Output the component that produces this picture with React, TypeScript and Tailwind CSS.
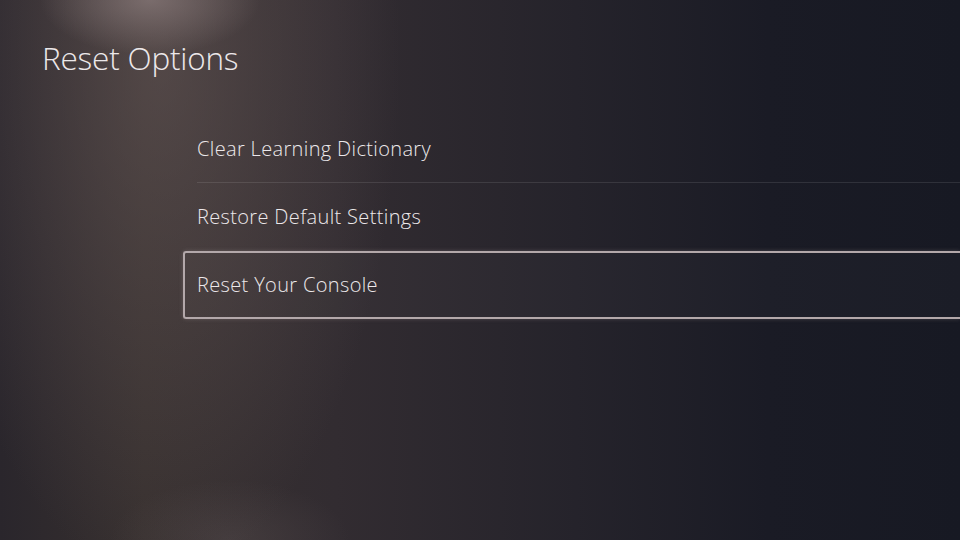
const items = ["Clear Learning Dictionary", "Restore Default Settings", "Reset Your Console"];

export default function App() {
  const selected = 2;
  return (
    <div className="relative h-[540px] w-[960px] overflow-hidden bg-[#1a1b24] font-['Open_Sans',sans-serif] text-[#ece8ea]">
      {/* background lighting */}
      <div className="pointer-events-none absolute inset-0 bg-[radial-gradient(ellipse_110px_55px_at_150px_0px,rgba(140,125,125,0.7),transparent),radial-gradient(ellipse_240px_520px_at_160px_60px,rgba(110,95,95,0.5),transparent),radial-gradient(ellipse_120px_60px_at_230px_540px,rgba(90,80,82,0.4),transparent),linear-gradient(90deg,#2a262c_0%,#37302f_15%,#322c31_35%,#25232b_60%,#1a1b25_80%,#171923_100%)]" />
      <div className="relative flex flex-col">
        <h1 className="pl-[42px] pt-[36px] text-[31.5px] font-light leading-[44px] tracking-[-0.2px]">Reset Options</h1>
        <ul className="mt-[35px] flex flex-col">
          {items.map((label, i) => (
            <li key={label} className="flex h-[68px] pl-[183px]">
              {i === selected ? (
                <div className="flex flex-1 items-center rounded-l-[3px] border-y-2 border-l-2 border-[#b3a8aa] bg-white/[0.02] pl-[12px] shadow-[0_0_4px_rgba(200,180,180,0.25)]">
                  <span className="text-[20px] font-light tracking-[0.35px]">{label}</span>
                </div>
              ) : (
                <div className={`ml-[14px] flex flex-1 items-center ${i === 0 ? "border-b border-white/10" : ""}`}>
                  <span className="text-[20px] font-light tracking-[0.35px]">{label}</span>
                </div>
              )}
            </li>
          ))}
        </ul>
      </div>
    </div>
  );
}
